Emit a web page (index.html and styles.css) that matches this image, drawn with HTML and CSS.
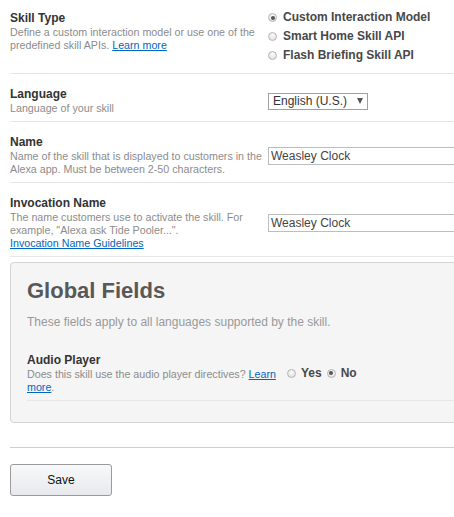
FILE: index.html
```html
<!DOCTYPE html>
<html lang="en">
<head>
<meta charset="utf-8">
<title>Skill Information</title>
<link rel="stylesheet" href="styles.css">
</head>
<body>
<div class="page">
  <div class="row row-top">
    <div class="label-col">
      <div class="title">Skill Type</div>
      <div class="desc">Define a custom interaction model or use one of the predefined skill APIs. <a href="#">Learn more</a></div>
    </div>
    <div class="field-col">
      <div class="radios">
        <label class="radio"><input type="radio" name="skilltype" checked><span>Custom Interaction Model</span></label>
        <label class="radio"><input type="radio" name="skilltype"><span>Smart Home Skill API</span></label>
        <label class="radio"><input type="radio" name="skilltype"><span>Flash Briefing Skill API</span></label>
      </div>
    </div>
  </div>

  <div class="row">
    <div class="label-col">
      <div class="title">Language</div>
      <div class="desc">Language of your skill</div>
    </div>
    <div class="field-col">
      <div class="select">English (U.S.)<span class="arrow"></span></div>
    </div>
  </div>

  <div class="row">
    <div class="label-col">
      <div class="title">Name</div>
      <div class="desc">Name of the skill that is displayed to customers in the Alexa app. Must be between 2-50 characters.</div>
    </div>
    <div class="field-col">
      <input class="text" type="text" value="Weasley Clock">
    </div>
  </div>

  <div class="row">
    <div class="label-col">
      <div class="title">Invocation Name</div>
      <div class="desc">The name customers use to activate the skill. For example, "Alexa ask Tide Pooler...".<br><a href="#">Invocation Name Guidelines</a></div>
    </div>
    <div class="field-col">
      <input class="text" type="text" value="Weasley Clock">
    </div>
  </div>

  <section class="panel">
    <h2 class="panel-title">Global Fields</h2>
    <p class="panel-note">These fields apply to all languages supported by the skill.</p>
    <div class="row row-panel">
      <div class="label-col">
        <div class="title">Audio Player</div>
        <div class="desc">Does this skill use the audio player directives? <a href="#">Learn more</a>.</div>
      </div>
      <div class="field-col inline-radios">
        <label class="radio"><input type="radio" name="audio"><span>Yes</span></label>
        <label class="radio"><input type="radio" name="audio" checked><span>No</span></label>
      </div>
    </div>
  </section>

  <hr class="divider">

  <button class="save" type="button">Save</button>
</div>
</body>
</html>
```

FILE: styles.css
```css
html, body {
  margin: 0;
  padding: 0;
  overflow: hidden;
  background: #fff;
}

body {
  font-family: "Liberation Sans", Arial, Helvetica, sans-serif;
  color: #333;
}

.page {
  width: 640px;
  padding-left: 10px;
}

a {
  color: #0066c0;
  text-decoration: underline;
}

.row {
  display: flex;
  align-items: center;
  gap: 3px;
  padding: 12px 0 6px;
  border-bottom: 1px solid #e7e7e7;
}

.row-top {
  align-items: flex-start;
  padding: 10px 0 8px;
}

.label-col {
  flex: none;
  width: 255px;
}

.field-col {
  flex: 1;
}

.title {
  font-size: 12px;
  font-weight: bold;
  line-height: 16px;
  color: #333;
}

.desc {
  font-size: 10.7px;
  line-height: 13px;
  color: #8c8c8c;
}

.radios {
  margin-top: -2px;
  display: flex;
  flex-direction: column;
}

.radio {
  display: inline-flex;
  align-items: center;
  gap: 6px;
  font-size: 12px;
  font-weight: bold;
  line-height: 19px;
  color: #484848;
}

.radio input {
  appearance: none;
  -webkit-appearance: none;
  margin: 0;
  width: 9px;
  height: 9px;
  border: 1px solid #b5b5b5;
  border-radius: 50%;
  background: radial-gradient(circle at 50% 35%, #fafafa 0%, #dcdcdc 100%);
  box-sizing: border-box;
  position: relative;
}

.radio input:checked::after {
  content: "";
  position: absolute;
  left: 1.5px;
  top: 1.5px;
  width: 4px;
  height: 4px;
  border-radius: 50%;
  background: #555;
}

.select {
  display: inline-flex;
  align-items: center;
  justify-content: space-between;
  box-sizing: border-box;
  width: 100px;
  height: 17px;
  padding: 0 4px 0 4px;
  border: 1px solid #a0a0a0;
  background: #fff;
  font-size: 12px;
  color: #333;
}

.arrow {
  width: 0;
  height: 0;
  border-left: 3px solid transparent;
  border-right: 3px solid transparent;
  border-top: 6px solid #555;
}

.text {
  box-sizing: border-box;
  width: 260px;
  height: 18px;
  margin: 0;
  padding: 0 2px;
  border: 1px solid #bdbdbd;
  font-family: "Liberation Sans", Arial, Helvetica, sans-serif;
  font-size: 12px;
  color: #444;
  background: #fff;
}

.panel {
  margin-top: 5px;
  padding: 15px 16px 21px;
  border: 1px solid #d4d4d4;
  border-radius: 4px;
  background: #f5f5f5;
}

.panel-title {
  margin: 0;
  font-size: 22px;
  line-height: 26px;
  font-weight: bold;
  color: #585858;
}

.panel-note {
  margin: 10px 0 0;
  font-size: 12px;
  line-height: 16px;
  color: #999;
}

.row-panel {
  margin-top: 10px;
}

.inline-radios {
  display: flex;
  gap: 5px;
  padding-left: 2px;
}

.inline-radios .radio {
  gap: 5px;
}

.divider {
  margin: 24px 0 0;
  border: 0;
  border-top: 1px solid #cfcfcf;
  height: 0;
}

.save {
  display: block;
  margin-top: 16px;
  width: 102px;
  height: 32px;
  border: 1px solid #9a9a9a;
  border-radius: 3px;
  background: linear-gradient(#f7f8fa, #e7e9ec);
  font-family: "Liberation Sans", Arial, Helvetica, sans-serif;
  font-size: 12px;
  color: #111;
  cursor: pointer;
}
```
